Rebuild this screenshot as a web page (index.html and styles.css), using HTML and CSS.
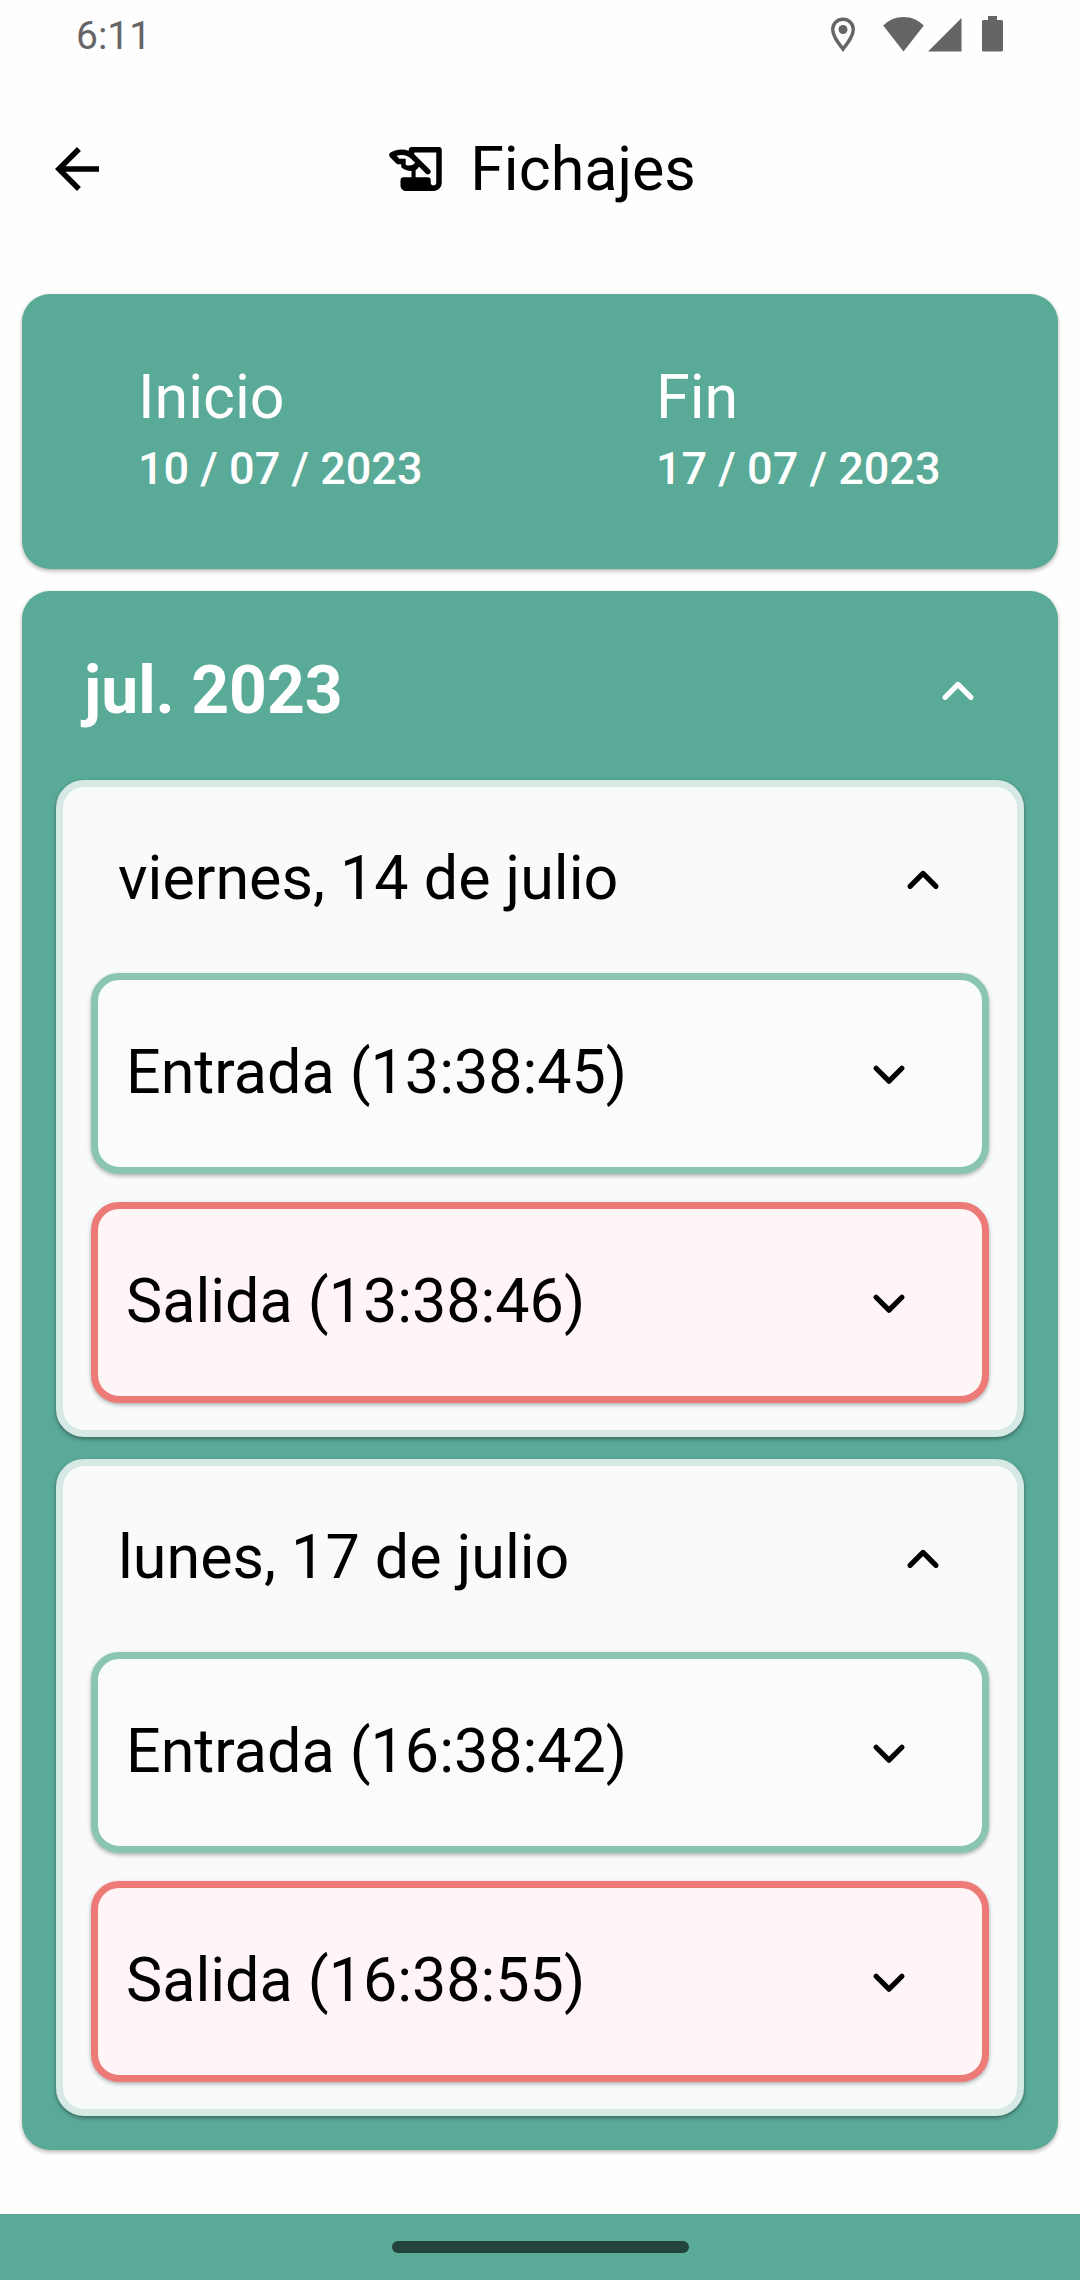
FILE: index.html
```html
<!DOCTYPE html>
<html lang="es">
<head>
<meta charset="utf-8">
<meta name="viewport" content="width=device-width, initial-scale=1">
<title>Fichajes</title>
<link rel="stylesheet" href="styles.css">
</head>
<body>
<svg class="defs" aria-hidden="true">
  <symbol id="chevron-up" viewBox="0 0 24 24"><path d="M7.3 14.3 12 9.6l4.7 4.7" fill="none" stroke="currentColor" stroke-width="1.9" stroke-linecap="round" stroke-linejoin="round"/></symbol>
  <symbol id="chevron-down" viewBox="0 0 24 24"><path d="M7.3 9.9 12 14.6l4.7-4.7" fill="none" stroke="currentColor" stroke-width="1.9" stroke-linecap="round" stroke-linejoin="round"/></symbol>
</svg>

<div class="status-bar">
  <span class="clock">6:11</span>
  <svg class="status-icons" viewBox="0 0 174 36" role="img" aria-label="Ubicación, wifi, señal y batería">
    <path d="M13 3.200c5.800 0 10.300 4.500 10.300 10.300 0 6.500-5.300 13-10.300 19.600C8 26.500 2.700 20 2.700 13.500 2.700 7.700 7.200 3.200 13 3.200z" fill="none" stroke="currentColor" stroke-width="3.400"/>
    <circle cx="13" cy="13.500" r="4.500" fill="currentColor"/>
    <path d="M73.500 1c8 0 15 3.200 20.300 8.600L73.500 35.500 53.200 9.600C58.500 4.200 65.500 1 73.500 1z" fill="currentColor"/>
    <path d="M131.500 2v33.500H98z" fill="currentColor"/>
    <path d="M158 0h9v4h4.500q1.500 0 1.500 1.500V34q0 1.500-1.500 1.500h-18q-1.500 0-1.500-1.500V5.500q0-1.500 1.500-1.500h4.500z" fill="currentColor"/>
  </svg>
</div>

<header class="app-bar">
  <button class="back" type="button" aria-label="Volver">
    <svg class="icon" viewBox="0 0 24 24"><path d="M20 11H7.830l5.590-5.590L12 4l-8 8 8 8 1.410-1.410L7.830 13H20z" fill="currentColor"/></svg>
  </button>
  <h1 class="title">
    <svg class="icon" viewBox="0 0 24 24" aria-hidden="true"><path fill-rule="evenodd" fill="currentColor" d="M9 5c0-.55.45-1 1-1h10c.55 0 1 .45 1 1v12c0 1.660-1.340 3-3 3H8c-1.100 0-2-.9-2-2v-2c0-.55.45-1 1-1h3v-2.270c-1.400-.05-2.850-.5-3.710-1.360v-1.110H4.780L2.300 7.800C1.700 7.200 1.700 6.400 2.400 6 3.600 5.250 5 4.880 6.390 4.880c.89 0 1.780.17 2.610.5zM7.890 10.410V8.260H5.610L4.570 7.220c.57-.22 1.190-.34 1.820-.34 1.340 0 2.590.52 3.540 1.460l1.410 1.410-.2.2c-.51.51-1.190.8-1.920.8-.47 0-.93-.12-1.330-.34zM19 17c0 .55-.45 1-1 1s-1-.45-1-1v-1c0-.55-.45-1-1-1h-4.500v-2.590c.57-.23.600-.570 1.060-1.030l.2-.2 2.540 2.520c.9.9 2.300-.5 1.400-1.400L11 6.620V6h8z"/></svg>
    <span>Fichajes</span>
  </h1>
</header>

<main class="content">
  <section class="card range">
    <button class="date" type="button"><span class="date-label">Inicio</span><span class="date-value">10 / 07 / 2023</span></button>
    <button class="date" type="button"><span class="date-label">Fin</span><span class="date-value">17 / 07 / 2023</span></button>
  </section>

  <section class="card month">
    <button class="row month-head" type="button" aria-expanded="true"><span>jul. 2023</span><svg class="icon"><use href="#chevron-up"/></svg></button>
    <div class="days">
      <section class="day">
        <button class="row day-head" type="button" aria-expanded="true"><span class="row-text">viernes, 14 de julio</span><svg class="icon"><use href="#chevron-up"/></svg></button>
        <div class="entries">
          <button class="row entry entry-in" type="button" aria-expanded="false"><span class="row-text">Entrada (13:38:45)</span><svg class="icon"><use href="#chevron-down"/></svg></button>
          <button class="row entry entry-out" type="button" aria-expanded="false"><span class="row-text">Salida (13:38:46)</span><svg class="icon"><use href="#chevron-down"/></svg></button>
        </div>
      </section>
      <section class="day">
        <button class="row day-head" type="button" aria-expanded="true"><span class="row-text">lunes, 17 de julio</span><svg class="icon"><use href="#chevron-up"/></svg></button>
        <div class="entries">
          <button class="row entry entry-in" type="button" aria-expanded="false"><span class="row-text">Entrada (16:38:42)</span><svg class="icon"><use href="#chevron-down"/></svg></button>
          <button class="row entry entry-out" type="button" aria-expanded="false"><span class="row-text">Salida (16:38:55)</span><svg class="icon"><use href="#chevron-down"/></svg></button>
        </div>
      </section>
    </div>
  </section>
</main>

<footer class="nav-bar"><div class="handle"></div></footer>
</body>
</html>
```
FILE: styles.css
```css
:root {
  --green: #5aaa98;
  --radius: 28px;
}

* {
  box-sizing: border-box;
}

body {
  margin: 0;
  min-height: 100vh;
  display: flex;
  flex-direction: column;
  background: #fefefe;
  color: #000;
  font-family: Roboto, "Liberation Sans", sans-serif;
  font-size: 61px;
  line-height: 72px;
}

button {
  margin: 0;
  padding: 0;
  border: 0;
  background: none;
  color: inherit;
  font: inherit;
  text-align: left;
  cursor: pointer;
}

.defs {
  position: absolute;
  width: 0;
  height: 0;
}

.icon {
  display: block;
  flex: none;
  width: 66px;
  height: 66px;
}

/* System status bar */
.status-bar {
  display: flex;
  justify-content: space-between;
  align-items: center;
  height: 68px;
  padding: 0 76px;
  color: #666467;
}

.clock {
  padding-top: 4px;
  font-size: 39px;
  line-height: 48px;
}

.status-icons {
  width: 174px;
  height: 36px;
}

/* Title bar */
.app-bar {
  display: grid;
  grid-template-columns: 66px 1fr 66px;
  align-items: center;
  height: 202px;
  padding: 0 44px;
}

.title {
  display: flex;
  justify-content: center;
  align-items: center;
  gap: 20px;
  margin: 0;
  font-size: 61px;
  font-weight: 400;
}

.content {
  flex: 1;
  display: flex;
  flex-direction: column;
  gap: 22px;
  padding: 24px 22px 64px;
}

.card {
  border-radius: var(--radius);
  background: var(--green);
  color: #fff;
  box-shadow: 0 2px 4px rgba(0, 0, 0, 0.3);
}

/* Date range */
.range {
  display: grid;
  grid-template-columns: 1fr 1fr;
  padding: 67px 0 64px;
}

.date {
  display: flex;
  flex-direction: column;
  padding-left: 116px;
}

.date-value {
  font-size: 45px;
  font-weight: 500;
}

/* Month and day groups */
.row {
  display: flex;
  justify-content: space-between;
  align-items: center;
  width: 100%;
}

.row-text {
  padding-bottom: 4px;
}

.month {
  padding: 10px 34px 34px;
}

.month-head {
  height: 179px;
  padding: 0 33px 0 28px;
  font-size: 66px;
  font-weight: 700;
}

.days {
  display: flex;
  flex-direction: column;
  gap: 22px;
}

.day {
  padding: 0 28px 27px;
  border: 7px solid #d6e9e4;
  border-radius: var(--radius);
  background: #f8fafc;
  color: #000;
  box-shadow: 0 2px 4px rgba(0, 0, 0, 0.4);
}

.day-head {
  height: 186px;
  padding: 0 33px 0 27px;
}

.entries {
  display: flex;
  flex-direction: column;
  gap: 28px;
}

.entry {
  height: 201px;
  padding: 0 60px 0 28px;
  border: 7px solid;
  border-radius: var(--radius);
  box-shadow: 0 2px 4px rgba(0, 0, 0, 0.3);
}

.entry-in {
  border-color: #8ac4b3;
  background: #f9fbfc;
}

.entry-out {
  border-color: #ee7a78;
  background: #fff4f6;
}

/* Gesture navigation bar */
.nav-bar {
  display: flex;
  justify-content: center;
  align-items: center;
  height: 66px;
  background: var(--green);
}

.handle {
  width: 297px;
  height: 12px;
  border-radius: 6px;
  background: #22443d;
}
```
